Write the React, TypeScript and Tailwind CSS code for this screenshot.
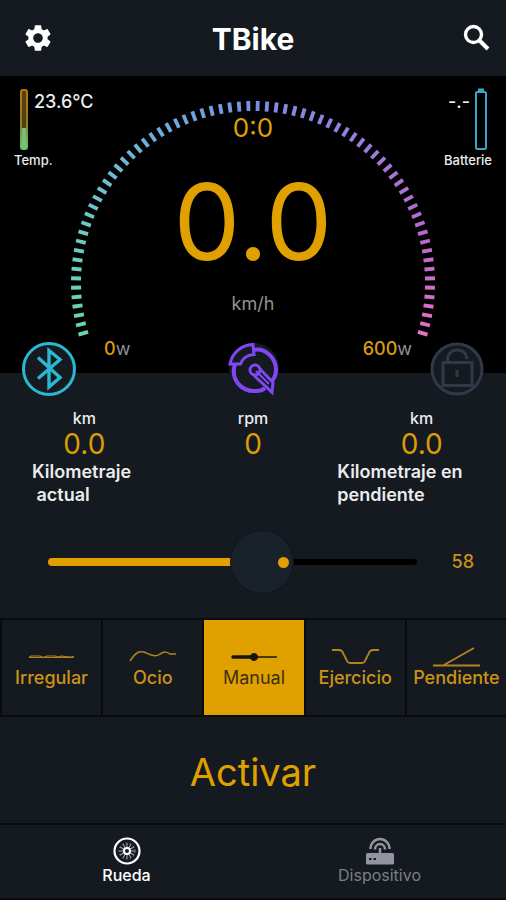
import { useState, type ReactNode } from "react";
import { MdSettings } from "react-icons/md";

const TICKS = 72;
const STOPS: [number, number[]][] = [
  [0, [108, 214, 170]],
  [0.2, [110, 196, 204]],
  [0.36, [108, 172, 222]],
  [0.5, [124, 142, 222]],
  [0.66, [150, 128, 220]],
  [0.85, [186, 104, 206]],
  [1, [226, 116, 196]],
];

function tickColor(t: number) {
  const i = Math.min(STOPS.length - 2, STOPS.filter(([p]) => p <= t).length - 1);
  const [p0, a] = STOPS[i];
  const [p1, b] = STOPS[i + 1];
  const k = (t - p0) / (p1 - p0);
  return `rgb(${a.map((v, n) => Math.round(v + (b[n] - v) * k)).join(",")})`;
}

function Gauge() {
  return (
    <svg viewBox="0 0 366 240" className="h-[240px] w-[366px]" aria-hidden="true">
      {Array.from({ length: TICKS }, (_, i) => (
        <line
          key={i}
          x1="183"
          x2="183"
          y1="1"
          y2="11"
          stroke={tickColor(i / (TICKS - 1))}
          strokeWidth="3.8"
          transform={`rotate(${-106.5 + i * 3} 183 183)`}
        />
      ))}
    </svg>
  );
}

function SearchIcon() {
  return (
    <svg viewBox="0 0 34 34" className="size-[34px]" fill="none" stroke="currentColor" strokeWidth="3.400">
      <circle cx="13.500" cy="13.500" r="8" />
      <path d="M19 19L28 28" strokeWidth="4" />
    </svg>
  );
}

function BluetoothIcon() {
  return (
    <svg viewBox="0 0 54 54" className="size-[54px]" fill="none" stroke="#2bb8d2">
      <circle cx="27" cy="27" r="25.5" fill="#141a20" strokeWidth="3" />
      <path d="M16 15.500L38 35.500L27 45V8.500L38 17.500L16 36.500" strokeWidth="3.400" />
    </svg>
  );
}

function CadenceIcon() {
  return (
    <svg viewBox="0 0 54 54" className="size-[54px]" fill="none" stroke="#8247f5" strokeWidth="3">
      <circle cx="28" cy="26" r="25" fill="#141a20" stroke="none" />
      <path d="M27 8C39 5 50 16 50 28C50 33 48 37 45 40" strokeWidth="4" />
      <path d="M9 22C4 38 16 50 30 49C34 49 37 48 39 46" strokeWidth="4" />
      <path d="M27 2.500L28 12.500C21 13 16 17 14.500 22H4C6 11 15 3 27 2.500Z" />
      <circle cx="29" cy="28" r="5" />
      <path d="M28 33.500L41 45.500L46 50.500L47 40.500L34 27" />
      <path d="M30 29L43 42" strokeWidth="2" />
    </svg>
  );
}

function LockIcon() {
  return (
    <svg viewBox="0 0 54 54" className="size-[54px]" fill="none" stroke="#313947" strokeWidth="3">
      <circle cx="27" cy="27" r="25" fill="#141a20" />
      <path d="M13 20.500H42V43.500H13Z" />
      <path d="M17.500 19C17.500 12 21 8 27 8C33 8 36.500 11 37 17" />
      <path d="M27 28V35" />
    </svg>
  );
}

function WheelIcon() {
  return (
    <svg viewBox="0 0 28 28" className="size-7" fill="none" stroke="#fff">
      <circle cx="14" cy="14" r="12.500" strokeWidth="2.200" />
      {Array.from({ length: 12 }, (_, i) => (
        <path key={i} d="M14 6V11" stroke="#aab0b5" transform={`rotate(${i * 30} 14 14)`} />
      ))}
      <circle cx="14" cy="14" r="8" stroke="#777d82" strokeDasharray="2 2" />
      <circle cx="14" cy="14" r="3" strokeWidth="2" />
    </svg>
  );
}

function RouterIcon() {
  return (
    <svg viewBox="0 0 28 28" className="size-7" fill="none" stroke="#92959f" strokeWidth="2.400">
      <path d="M4.500 12A9.500 10 0 0 1 23.500 12M9 12.500A5 5.500 0 0 1 19 12.500" />
      <path d="M14 11V18" strokeWidth="2.500" />
      <rect x="0" y="16" width="28" height="11.500" rx="1.500" fill="#92959f" stroke="none" />
      <path d="M3 22H5.500M7.500 22H10" stroke="#141a20" strokeWidth="2" />
    </svg>
  );
}

function Stat({ unit, value, children }: { unit: string; value: string; children?: ReactNode }) {
  return (
    <div className="flex flex-col">
      <span className="text-center text-base leading-5 font-medium">{unit}</span>
      <span className="text-center text-[28px] leading-8 text-[#dc9c0a]">{value}</span>
      {children}
    </div>
  );
}

const MODES: { name: string; art: ReactNode }[] = [
  {
    name: "Irregular",
    art: <path d="M1 13.500L3 12H12L14 13H17L19 12H27L30 13L33 12L42 13L46 12.500M1 13.500H46" strokeWidth="1.200" />,
  },
  {
    name: "Ocio",
    art: <path d="M1 17C7 8 10 7 15 8C20 10 26 14 31 10C36 7 38 8 41 10H47" strokeWidth="1.500" />,
  },
  {
    name: "Manual",
    art: (
      <>
        <path d="M3 13H26" strokeWidth="3.500" strokeLinecap="round" />
        <path d="M24 13H47" strokeWidth="1.500" />
        <circle cx="24" cy="13" r="3.500" fill="currentColor" />
      </>
    ),
  },
  {
    name: "Ejercicio",
    art: <path d="M1 6H8Q11 6 12 9L16 17Q17 19 19 19H31Q33 19 34 17L38 9Q39 6 42 6H48" strokeWidth="1.800" />,
  },
  {
    name: "Pendiente",
    art: <path d="M1 21.500H48M11 21.500L42 4" strokeWidth="1.800" />,
  },
];

export default function App() {
  const [level, setLevel] = useState(58);
  const [mode, setMode] = useState("Manual");

  return (
    <div className="flex min-h-screen flex-col bg-[#141a20] font-['Inter','Noto_Sans',sans-serif] text-[#ececec]">
      <header className="flex h-[76px] items-center justify-between px-3 text-white">
        <button aria-label="Ajustes" className="grid w-[52px] place-items-center">
          <MdSettings size={32} />
        </button>
        <h1 className="pt-0.5 text-[30px] leading-8 font-bold">TBike</h1>
        <button aria-label="Buscar" className="flex w-[52px] justify-end">
          <SearchIcon />
        </button>
      </header>

      <section className="grid h-[297px] grid-cols-1 bg-black">
        <div className="col-start-1 row-start-1 flex items-start justify-between px-3.5 pt-3">
          <div className="flex flex-col">
            <div className="flex gap-1.5 pl-1.5">
              <svg viewBox="0 0 8 63" className="h-[63px] w-2" aria-hidden="true">
                <defs>
                  <linearGradient id="heat" x1="0" x2="0" y1="0" y2="1">
                    <stop offset="0" stopColor="#b47510" />
                    <stop offset="0.55" stopColor="#887d28" />
                    <stop offset="1" stopColor="#55cf70" />
                  </linearGradient>
                </defs>
                <rect x="1" y="2" width="6" height="59" rx="2" fill="#544012" stroke="url(#heat)" strokeWidth="2" />
                <rect x="2" y="40" width="4" height="20" fill="#83b878" />
              </svg>
              <span className="pt-1 text-lg leading-5 font-medium">23.6°C</span>
            </div>
            <span className="text-[13px] leading-[18px] font-medium">Temp.</span>
          </div>
          <div className="flex flex-col items-end">
            <div className="flex gap-1 pr-1">
              <span className="pt-1 text-lg leading-5 font-medium">-.-</span>
              <svg viewBox="0 0 14 63" className="h-[63px] w-[14px]" fill="none" stroke="#3aa5cd" strokeWidth="2" aria-hidden="true">
                <path d="M4 2H10" strokeWidth="3" />
                <rect x="2" y="4" width="10" height="57" rx="1.500" />
              </svg>
            </div>
            <span className="text-[13px] leading-[18px] font-medium">Batterie</span>
          </div>
        </div>
        <div className="col-start-1 row-start-1 flex justify-center pt-6">
          <Gauge />
        </div>
        <div className="col-start-1 row-start-1 mx-auto flex w-[366px] flex-col pt-8 text-center">
          <span className="text-[26px] leading-10 text-[#dea005]">0:0</span>
          <span className="text-[106px] leading-[148px] text-[#e0a000]">0.0</span>
          <span className="text-lg leading-4 text-[#929292]">km/h</span>
          <div className="flex justify-between pt-[25px] pr-6 pl-[34px] text-lg leading-6 text-[#929292]">
            <span><span className="font-medium text-[#dc9c0a]">0</span>w</span>
            <span><span className="font-medium text-[#dc9c0a]">600</span>w</span>
          </div>
        </div>
      </section>

      <div className="relative -mt-[31px] grid grid-cols-3 items-center px-[22px]">
        <button aria-label="Bluetooth" className="justify-self-start"><BluetoothIcon /></button>
        <button aria-label="Cadencia" className="justify-self-center"><CadenceIcon /></button>
        <button aria-label="Bloqueo" className="justify-self-end"><LockIcon /></button>
      </div>

      <section className="grid grid-cols-3 pt-3">
        <Stat unit="km" value="0.0">
          <p className="pl-8 text-lg leading-[23px] font-semibold">Kilometraje<br />&nbsp;actual</p>
        </Stat>
        <Stat unit="rpm" value="0" />
        <Stat unit="km" value="0.0">
          <p className="text-lg leading-[23px] font-semibold">Kilometraje en<br />pendiente</p>
        </Stat>
      </section>

      <section className="flex items-center pt-6 pr-8 pl-12">
        <div className="relative flex h-16 flex-1 items-center">
          <div className="h-1.5 w-full rounded-full bg-black">
            <div className="-mt-px h-2 rounded-full bg-[#e0a000]" style={{ width: `${level}%` }} />
          </div>
          <div
            className="absolute flex size-16 -translate-x-1/2 items-center justify-end rounded-full border border-[#10151b] bg-[#19212a] pr-1"
            style={{ left: `${level}%` }}
          >
            <span className="size-[11px] rounded-full bg-[#e0a000]" />
          </div>
          <input
            id="level"
            type="range"
            min="0"
            max="100"
            value={level}
            onChange={(e) => setLevel(Number(e.target.value))}
            aria-label="Nivel"
            className="absolute inset-0 w-full cursor-pointer opacity-0"
          />
        </div>
        <output htmlFor="level" className="w-[57px] text-right text-lg leading-6 font-medium text-[#c98f17]">
          {level}
        </output>
      </section>

      <section className="mt-6 grid grid-cols-5 border-y-2 border-[#080b0f]">
        {MODES.map(({ name, art }) => (
          <button
            key={name}
            onClick={() => setMode(name)}
            aria-pressed={mode === name}
            className={
              "flex h-[95px] flex-col items-center border-l-2 border-[#080b0f] pt-6 text-lg leading-6 " +
              (mode === name ? "bg-[#e0a000] text-[#3c300e]" : "font-medium text-[#cd9218]")
            }
          >
            <svg
              viewBox="0 0 48 24"
              className={"h-6 w-12 " + (mode === name ? "text-[#15140d]" : "text-[#b58220]")}
              fill="none"
              stroke="currentColor"
              aria-hidden="true"
            >
              {art}
            </svg>
            <span className="-mt-0.5">{name}</span>
          </button>
        ))}
      </section>

      <button className="min-h-[106px] flex-1 pt-1 text-[38px] leading-[48px] text-[#e0a000]">Activar</button>

      <nav className="grid h-[77px] grid-cols-2 border-t-2 border-b-2 border-[#080b0f] text-base leading-5">
        <a href="#rueda" className="flex flex-col items-center pt-3 font-medium text-white">
          <WheelIcon />
          Rueda
        </a>
        <a href="#dispositivo" className="flex flex-col items-center pt-3 text-[#7b7f86]">
          <RouterIcon />
          Dispositivo
        </a>
      </nav>
    </div>
  );
}
